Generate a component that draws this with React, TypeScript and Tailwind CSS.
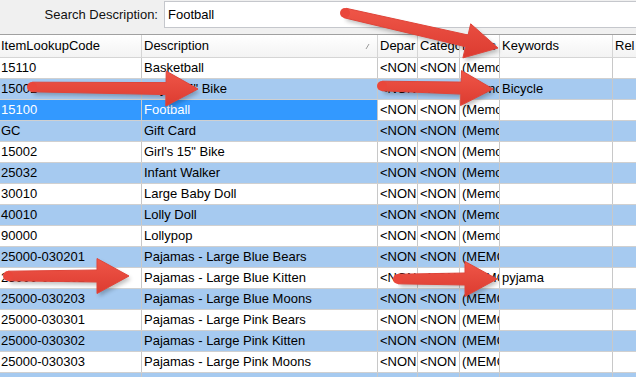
import React from "react";

type Row = { code: string; desc: string; memo: string; kw: string; alt: boolean; sel?: boolean };

const rows: Row[] = [
  { code: "15110", desc: "Basketball", memo: "(Memo", kw: "", alt: false },
  { code: "15001", desc: "Boy's 15\" Bike", memo: "(Memo", kw: "Bicycle", alt: true },
  { code: "15100", desc: "Football", memo: "(Memo", kw: "", alt: false, sel: true },
  { code: "GC", desc: "Gift Card", memo: "(Memo", kw: "", alt: true },
  { code: "15002", desc: "Girl's 15\" Bike", memo: "(Memo", kw: "", alt: false },
  { code: "25032", desc: "Infant Walker", memo: "(Memo", kw: "", alt: true },
  { code: "30010", desc: "Large Baby Doll", memo: "(Memo", kw: "", alt: false },
  { code: "40010", desc: "Lolly Doll", memo: "(Memo", kw: "", alt: true },
  { code: "90000", desc: "Lollypop", memo: "(Memo", kw: "", alt: false },
  { code: "25000-030201", desc: "Pajamas - Large Blue Bears", memo: "(MEMO", kw: "", alt: true },
  { code: "25000-030202", desc: "Pajamas - Large Blue Kitten", memo: "(MEMO", kw: "pyjama", alt: false },
  { code: "25000-030203", desc: "Pajamas - Large Blue Moons", memo: "(MEMO", kw: "", alt: true },
  { code: "25000-030301", desc: "Pajamas - Large Pink Bears", memo: "(MEMO", kw: "", alt: false },
  { code: "25000-030302", desc: "Pajamas - Large Pink Kitten", memo: "(MEMO", kw: "", alt: true },
  { code: "25000-030303", desc: "Pajamas - Large Pink Moons", memo: "(MEMO", kw: "", alt: false },
  { code: "", desc: "", memo: "", kw: "", alt: true },
];

function arrowPoints(x1: number, y1: number, x2: number, y2: number, sw: number, hw: number, hl: number) {
  const dx = x2 - x1;
  const dy = y2 - y1;
  const len = Math.sqrt(dx * dx + dy * dy);
  const ux = dx / len;
  const uy = dy / len;
  const px = -uy;
  const py = ux;
  const bx = x2 - ux * hl;
  const by = y2 - uy * hl;
  const pts = [
    [x1 + px * (sw / 2) * 0.8, y1 + py * (sw / 2) * 0.8],
    [bx + px * (sw / 2), by + py * (sw / 2)],
    [bx + px * (hw / 2), by + py * (hw / 2)],
    [x2, y2],
    [bx - px * (hw / 2), by - py * (hw / 2)],
    [bx - px * (sw / 2), by - py * (sw / 2)],
    [x1 - px * (sw / 2) * 0.8, y1 - py * (sw / 2) * 0.8],
  ];
  return pts.map((p) => p.map((v) => v.toFixed(1)).join(",")).join(" ");
}

function Arrow({ x1, y1, x2, y2 }: { x1: number; y1: number; x2: number; y2: number }) {
  const pts = arrowPoints(x1, y1, x2, y2, 12, 35, 32);
  return (
    <g>
      <polygon points={pts} fill="#000" opacity="0.25" transform="translate(2,3)" filter="url(#blur)" />
      <polygon points={pts} fill="url(#redgrad)" strokeLinejoin="round" stroke="#e0453a" strokeWidth="1" />
      <circle cx={x1} cy={y1} r={5} fill="#e9473b" />
    </g>
  );
}

const colW = ["w-[142px]", "w-[236px]", "w-[40px]", "w-[42px]", "w-[40px]", "w-[113px]"];

export default function App() {
  return (
    <div
      className="relative w-[636px] h-[377px] overflow-hidden bg-white text-[13px] text-black"
      style={{ fontFamily: '"Liberation Sans", Arial, sans-serif' }}
    >
      <div className="h-[35px] bg-[#f0f0f0] flex items-start border-b border-[#a0a0a0]">
        <div className="w-[164px] pr-[6px] h-[29px] flex items-center justify-end text-[#111]">Search Description:</div>
        <div className="flex-1 mt-[1px] h-[27px] bg-white border border-[#c5c7cc] border-r-0 flex items-center pl-[3px]">
          Football
        </div>
      </div>
      <div className="flex h-[23px] border-b border-[#d5d5d5] bg-gradient-to-b from-[#ffffff] to-[#f3f3f3]">
        {["ItemLookupCode", "Description", "Depar", "Category", "Notes", "Keywords"].map((h, i) => (
          <div
            key={h}
            className={`${colW[i]} shrink-0 relative h-full flex items-center overflow-hidden whitespace-nowrap border-r border-[#d5d5d5] ${i === 0 ? "pl-[1px]" : "pl-[2px]"}`}
          >
            {h}
            {i === 1 && (
              <svg className="absolute right-[7px] top-[8px]" width="5" height="7" viewBox="0 0 5 7">
                <line x1="1" y1="6" x2="4" y2="1" stroke="#9a9a9a" strokeWidth="1" />
              </svg>
            )}
          </div>
        ))}
        <div className="flex-1 h-full flex items-center pl-[2px] overflow-hidden whitespace-nowrap">Rel</div>
      </div>
      {rows.map((r, ri) => {
        const bg = r.alt ? "bg-[#a6caf0]" : "bg-white";
        const cells = [r.code, r.desc, r.code ? "<NON" : "", r.code ? "<NON" : "", r.memo, r.kw];
        return (
          <div key={ri} className={`flex h-[21px] border-b border-[#d0d0d0] ${bg}`}>
            {cells.map((c, ci) => {
              const sel = r.sel && ci < 2;
              return (
                <div
                  key={ci}
                  className={`${colW[ci]} shrink-0 h-full flex items-center overflow-hidden whitespace-nowrap border-r border-[#c8c8c8] ${ci === 0 ? "pl-[1px]" : "pl-[2px]"} ${sel ? "bg-[#3399ff] text-white" : r.sel ? "bg-white" : ""}`}
                >
                  {c}
                </div>
              );
            })}
            <div className={`flex-1 h-full ${r.sel ? "bg-white" : ""}`} />
          </div>
        );
      })}
      <svg className="absolute left-0 top-0 pointer-events-none" width="636" height="377">
        <defs>
          <linearGradient id="redgrad" x1="0" y1="0" x2="0" y2="1">
            <stop offset="0" stopColor="#ef5648" />
            <stop offset="1" stopColor="#dc3b30" />
          </linearGradient>
          <filter id="blur" x="-20%" y="-50%" width="140%" height="200%">
            <feGaussianBlur stdDeviation="2" />
          </filter>
        </defs>
        <Arrow x1={345} y1={13} x2={498} y2={48} />
        <Arrow x1={32} y1={87} x2={198} y2={89} />
        <Arrow x1={382} y1={86} x2={493} y2={89} />
        <Arrow x1={8} y1={276} x2={129} y2={276} />
        <Arrow x1={398} y1={279} x2={497} y2={279} />
      </svg>
    </div>
  );
}
